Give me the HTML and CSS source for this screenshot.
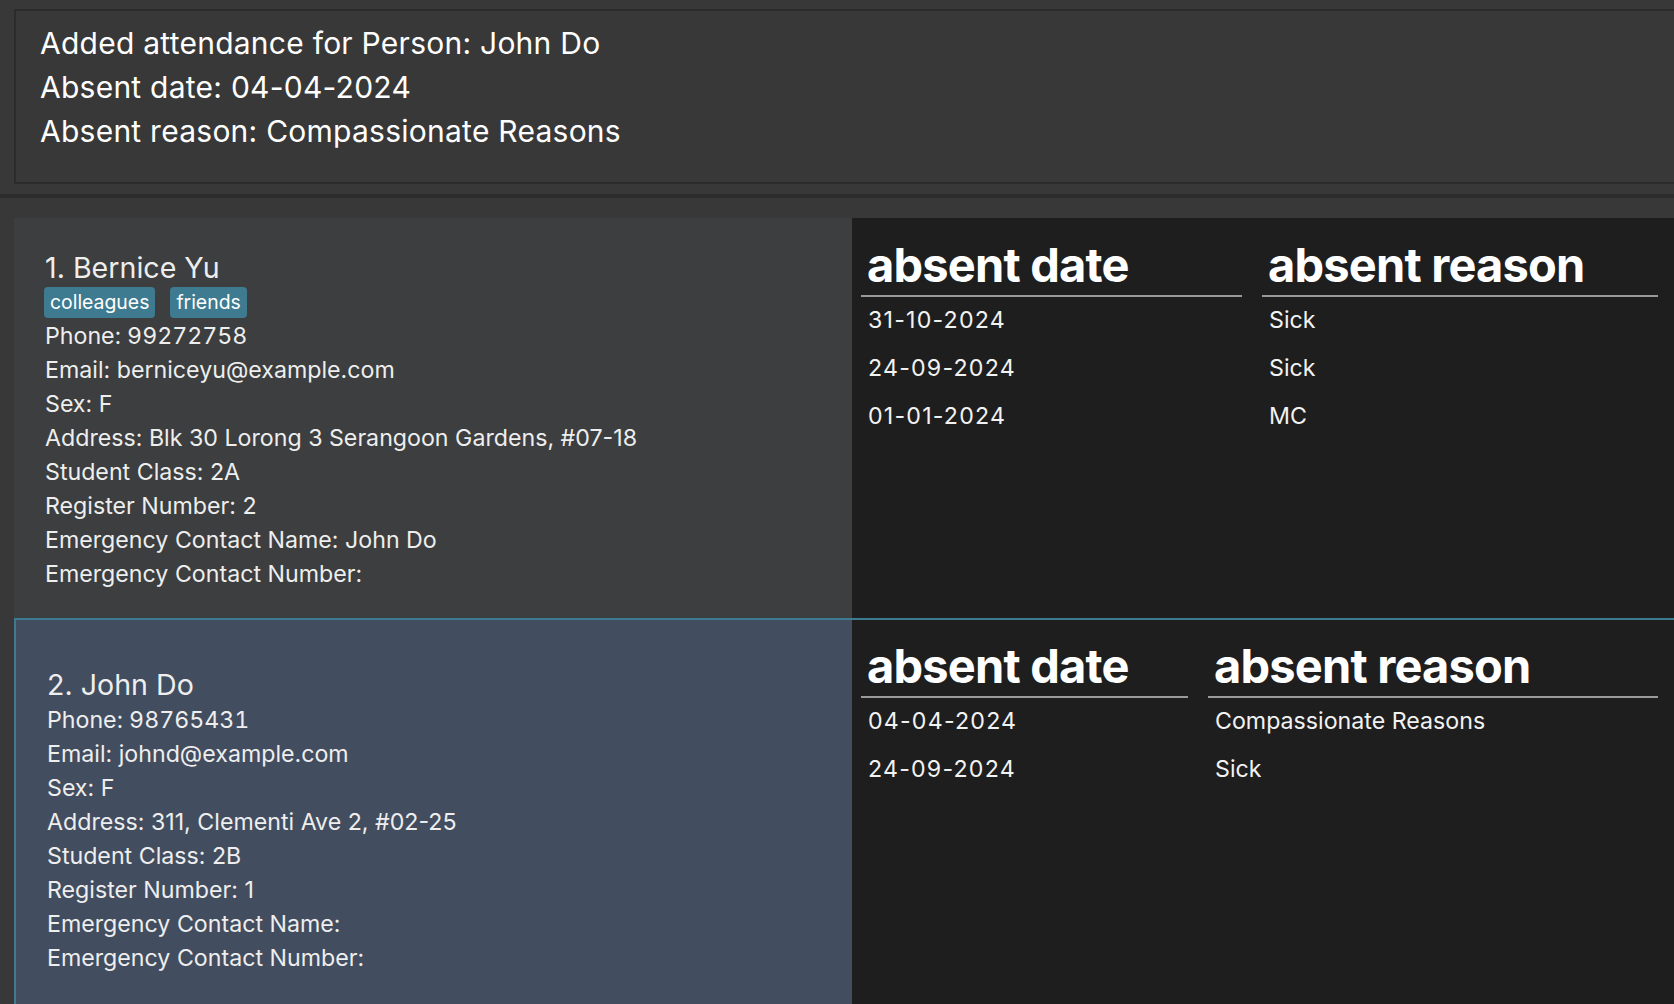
FILE: index.html
```html
<!DOCTYPE html>
<html lang="en">
<head>
<meta charset="utf-8">
<title>Address Book</title>
<link rel="stylesheet" href="styles.css">
</head>
<body>
<div class="app">
  <div class="result-box">
    <div class="result-line">Added attendance for Person: John Do</div>
    <div class="result-line">Absent date: 04-04-2024</div>
    <div class="result-line">Absent reason: Compassionate Reasons</div>
  </div>
  <div class="divider"></div>
  <div class="list">
    <div class="row">
      <div class="card">
        <div class="card-content">
          <div class="name">1. Bernice Yu</div>
          <div class="tags">
            <span class="tag">colleagues</span>
            <span class="tag">friends</span>
          </div>
          <div class="field numeric">Phone: 99272758</div>
          <div class="field">Email: berniceyu@example.com</div>
          <div class="field">Sex: F</div>
          <div class="field">Address: Blk 30 Lorong 3 Serangoon Gardens, #07-18</div>
          <div class="field">Student Class: 2A</div>
          <div class="field">Register Number: 2</div>
          <div class="field">Emergency Contact Name: John Do</div>
          <div class="field">Emergency Contact Number:</div>
        </div>
      </div>
      <div class="attendance">
        <div class="table table-a">
          <div class="th">absent date</div>
          <div class="th">absent reason</div>
          <div class="td date">31-10-2024</div>
          <div class="td">Sick</div>
          <div class="td date">24-09-2024</div>
          <div class="td">Sick</div>
          <div class="td date">01-01-2024</div>
          <div class="td">MC</div>
        </div>
      </div>
    </div>
    <div class="row selected">
      <div class="card">
        <div class="card-content">
          <div class="name">2. John Do</div>
          <div class="field numeric">Phone: 98765431</div>
          <div class="field">Email: johnd@example.com</div>
          <div class="field">Sex: F</div>
          <div class="field">Address: 311, Clementi Ave 2, #02-25</div>
          <div class="field">Student Class: 2B</div>
          <div class="field">Register Number: 1</div>
          <div class="field">Emergency Contact Name:</div>
          <div class="field">Emergency Contact Number:</div>
        </div>
      </div>
      <div class="attendance">
        <div class="table table-b">
          <div class="th">absent date</div>
          <div class="th">absent reason</div>
          <div class="td date">04-04-2024</div>
          <div class="td">Compassionate Reasons</div>
          <div class="td date">24-09-2024</div>
          <div class="td">Sick</div>
        </div>
      </div>
    </div>
  </div>
</div>
</body>
</html>
```
FILE: styles.css
```css
html, body {
  margin: 0;
  padding: 0;
  background: #383838;
  overflow: hidden;
  width: 1674px;
  height: 1004px;
}

body {
  font-family: Inter, "Noto Sans", "Liberation Sans", sans-serif;
  color: #ffffff;
}

.app {
  display: flex;
  flex-direction: column;
  width: 1674px;
  height: 1004px;
  overflow: hidden;
}

.result-box {
  box-sizing: border-box;
  margin: 9px 0 0 14px;
  width: 1700px;
  height: 175px;
  border: 2px solid #2b2b2b;
  padding: 10px 0 0 24px;
  flex: none;
}

.result-line {
  font-size: 30px;
  line-height: 44px;
  letter-spacing: 0.25px;
  color: #ffffff;
  white-space: nowrap;
}

.divider {
  flex: none;
  height: 4px;
  margin-top: 10px;
  background: #2c2c2c;
}

.list {
  margin: 20px 0 0 14px;
  width: 1670px;
  display: flex;
  flex-direction: column;
  flex: none;
}

.row {
  display: flex;
  height: 400px;
  box-sizing: border-box;
}

.row.selected {
  border: 2px solid #3e7b91;
}

.card {
  box-sizing: border-box;
  width: 838px;
  flex: none;
  background: #3c3e3f;
  display: flex;
  flex-direction: column;
  justify-content: center;
  padding: 6px 0 0 31px;
}

.row.selected .card {
  width: 836px;
  background: #424d5f;
  padding-top: 7px;
}

.card-content {
  display: flex;
  flex-direction: column;
  color: #eeeeee;
}

.name {
  font-size: 28.6px;
  line-height: 34px;
  white-space: nowrap;
}

.row.selected .name {
  margin-bottom: 1px;
}

.tags {
  display: flex;
  gap: 15px;
  margin: 2px 0 1px -1px;
}

.tag {
  background: #3e7b91;
  color: #ffffff;
  font-size: 19.4px;
  line-height: 31px;
  height: 31px;
  padding: 0 6px;
  border-radius: 4px;
}

.field {
  font-size: 23.2px;
  line-height: 34px;
  white-space: nowrap;
}

.field.numeric {
  font-variant-numeric: tabular-nums;
}

.attendance {
  flex: 1;
  background: #1e1e1e;
  box-sizing: border-box;
  padding: 18px 26px 0 9px;
}

.row.selected .attendance {
  padding-top: 17px;
}

.table {
  display: grid;
  column-gap: 20px;
  align-content: start;
}

.table-a {
  grid-template-columns: 381px 396px;
}

.table-b {
  grid-template-columns: 327px 450px;
}

.th {
  font-size: 47px;
  font-weight: 700;
  line-height: 58px;
  letter-spacing: -0.8px;
  color: #ffffff;
  padding: 0 0 1px 6px;
  border-bottom: 2px solid #9a9a9a;
  white-space: nowrap;
}

.td {
  font-size: 23.2px;
  line-height: 44px;
  padding: 1px 0 3px 7px;
  color: #f2f2f2;
  white-space: nowrap;
}

.td.date {
  letter-spacing: 1.2px;
}
```
